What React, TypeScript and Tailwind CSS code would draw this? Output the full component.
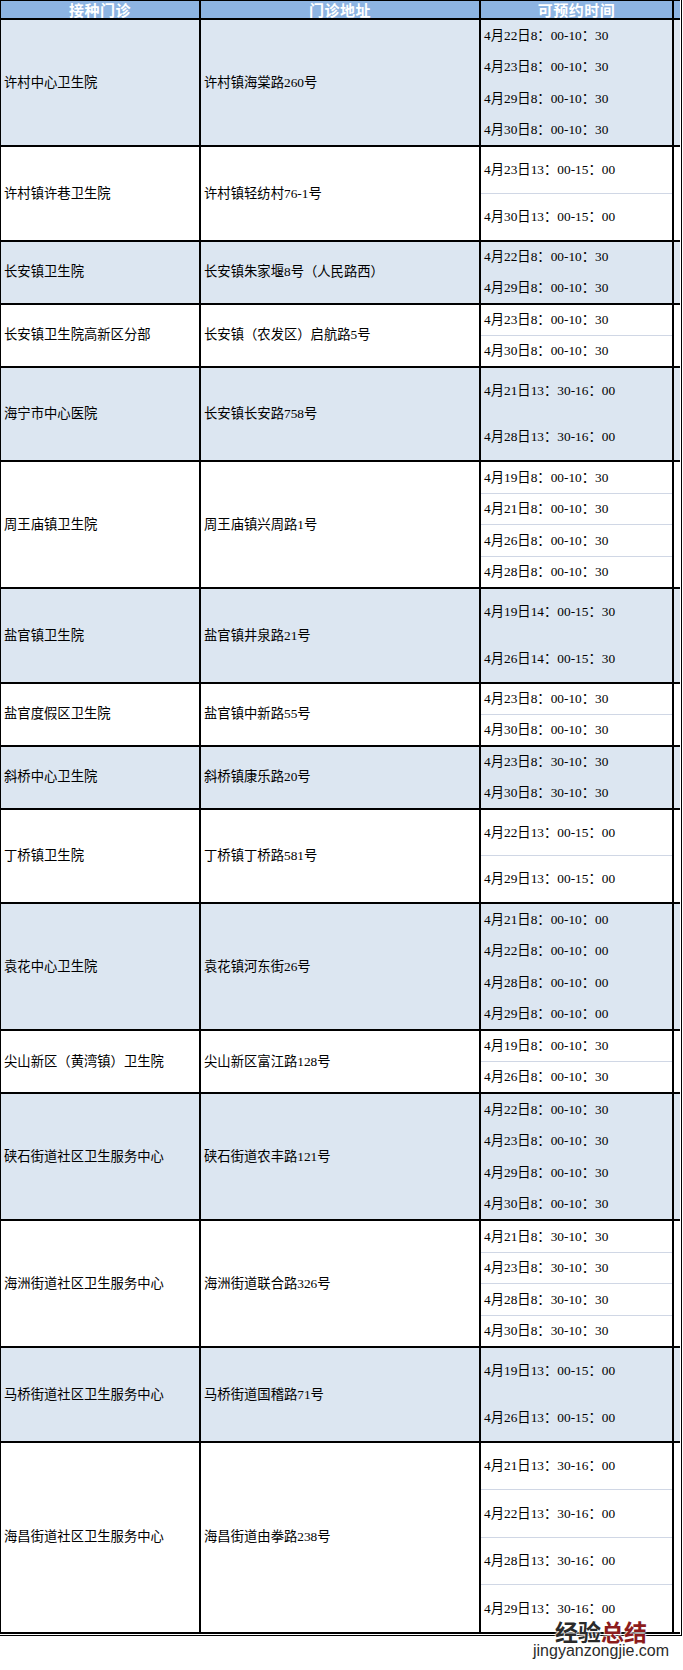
import React from 'react';

type Clinic = {
  name: string;
  addr: string;
  times: string[];
  h: string; // content height of the block (sub-rows share it)
};

const clinics: Clinic[] = [
  { name: '许村中心卫生院', addr: '许村镇海棠路260号', h: 'h-[127px]', times: ['4月22日8：00-10：30', '4月23日8：00-10：30', '4月29日8：00-10：30', '4月30日8：00-10：30'] },
  { name: '许村镇许巷卫生院', addr: '许村镇轻纺村76-1号', h: 'h-[94.5px]', times: ['4月23日13：00-15：00', '4月30日13：00-15：00'] },
  { name: '长安镇卫生院', addr: '长安镇朱家堰8号（人民路西）', h: 'h-[63px]', times: ['4月22日8：00-10：30', '4月29日8：00-10：30'] },
  { name: '长安镇卫生院高新区分部', addr: '长安镇（农发区）启航路5号', h: 'h-[63px]', times: ['4月23日8：00-10：30', '4月30日8：00-10：30'] },
  { name: '海宁市中心医院', addr: '长安镇长安路758号', h: 'h-[94.5px]', times: ['4月21日13：30-16：00', '4月28日13：30-16：00'] },
  { name: '周王庙镇卫生院', addr: '周王庙镇兴周路1号', h: 'h-[127px]', times: ['4月19日8：00-10：30', '4月21日8：00-10：30', '4月26日8：00-10：30', '4月28日8：00-10：30'] },
  { name: '盐官镇卫生院', addr: '盐官镇井泉路21号', h: 'h-[94.5px]', times: ['4月19日14：00-15：30', '4月26日14：00-15：30'] },
  { name: '盐官度假区卫生院', addr: '盐官镇中新路55号', h: 'h-[63px]', times: ['4月23日8：00-10：30', '4月30日8：00-10：30'] },
  { name: '斜桥中心卫生院', addr: '斜桥镇康乐路20号', h: 'h-[63px]', times: ['4月23日8：30-10：30', '4月30日8：30-10：30'] },
  { name: '丁桥镇卫生院', addr: '丁桥镇丁桥路581号', h: 'h-[94.5px]', times: ['4月22日13：00-15：00', '4月29日13：00-15：00'] },
  { name: '袁花中心卫生院', addr: '袁花镇河东街26号', h: 'h-[127px]', times: ['4月21日8：00-10：00', '4月22日8：00-10：00', '4月28日8：00-10：00', '4月29日8：00-10：00'] },
  { name: '尖山新区（黄湾镇）卫生院', addr: '尖山新区富江路128号', h: 'h-[63px]', times: ['4月19日8：00-10：30', '4月26日8：00-10：30'] },
  { name: '硖石街道社区卫生服务中心', addr: '硖石街道农丰路121号', h: 'h-[127px]', times: ['4月22日8：00-10：30', '4月23日8：00-10：30', '4月29日8：00-10：30', '4月30日8：00-10：30'] },
  { name: '海洲街道社区卫生服务中心', addr: '海洲街道联合路326号', h: 'h-[127px]', times: ['4月21日8：30-10：30', '4月23日8：30-10：30', '4月28日8：30-10：30', '4月30日8：30-10：30'] },
  { name: '马桥街道社区卫生服务中心', addr: '马桥街道国稽路71号', h: 'h-[94.5px]', times: ['4月19日13：00-15：00', '4月26日13：00-15：00'] },
  { name: '海昌街道社区卫生服务中心', addr: '海昌街道由拳路238号', h: 'h-[191px]', times: ['4月21日13：30-16：00', '4月22日13：30-16：00', '4月28日13：30-16：00', '4月29日13：30-16：00'] },
];

const body = "font-['Liberation_Serif','Noto_Sans_CJK_SC',serif] text-[13.33px] text-black leading-none";

export default function App() {
  return (
    <div className="w-[683px] h-[1670px] bg-white relative">
      <div className="w-[682px] border-r border-b border-black pr-px pb-px">
        {/* header */}
        <div className="flex border-t border-l border-b-2 border-black bg-[#8db4e2] text-white font-bold text-[15px] leading-[17px] tracking-[0.5px] font-['Noto_Sans_CJK_SC',sans-serif]">
          <div className="w-[200px] h-[17px] text-center border-r-2 border-black">接种门诊</div>
          <div className="w-[280px] h-[17px] text-center border-r-2 border-black">门诊地址</div>
          <div className="w-[193px] h-[17px] text-center border-r-2 border-black">可预约时间</div>
        </div>

        {clinics.map((c, i) => {
          const blue = i % 2 === 0;
          return (
            <div
              key={c.name}
              className={`flex border-l border-b-2 border-black ${c.h} ${blue ? 'bg-[#dce6f1]' : 'bg-white'} ${body}`}
            >
              <div className="w-[200px] flex items-center pl-[3px] border-r-2 border-black">{c.name}</div>
              <div className="w-[280px] flex items-center pl-[3px] border-r-2 border-black">{c.addr}</div>
              <div className="w-[193px] flex flex-col border-r-2 border-black">
                {c.times.map((t, j) => (
                  <div
                    key={t}
                    className={`flex-1 flex items-center pl-[3px] ${j > 0 ? (blue ? 'border-t border-[#dce6f1]' : 'border-t border-[#d0d7e5]') : ''}`}
                  >
                    {t}
                  </div>
                ))}
              </div>
            </div>
          );
        })}
      </div>

      {/* watermark */}
      <div className="absolute left-[555px] top-[1620px] font-['Noto_Sans_CJK_SC',sans-serif] font-bold text-[23px] leading-none [text-shadow:0_0_2px_#fff,0_0_2px_#fff,0_0_2px_#fff]">
        <span className="text-[#2a2a2a]">经验</span>
        <span className="text-[#8c1c1c]">总结</span>
      </div>
      <div className="absolute left-[533px] top-[1643px] font-['Liberation_Sans',sans-serif] text-[16px] leading-none text-[#2b2b2b] [text-shadow:0_0_2px_#fff,0_0_2px_#fff]">
        jingyanzongjie.com
      </div>
    </div>
  );
}
